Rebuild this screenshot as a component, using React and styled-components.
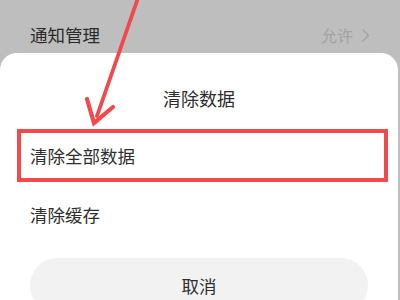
import styled, { createGlobalStyle } from "styled-components";

const GlobalStyle = createGlobalStyle`
  html, body {
    margin: 0;
    padding: 0;
    background: #bebebe;
  }
  body {
    font-family: "Noto Sans CJK SC", "Noto Sans", sans-serif;
  }
`;

export default function App() {
  return (
    <>
      <GlobalStyle />
      <Page>
        <SettingRow>
          <SettingLabel>通知管理</SettingLabel>
          <SettingValue>
            允许
            <svg width="9" height="15" viewBox="0 0 9 15">
              <path d="M1.5 1.5 L7.5 7.5 L1.5 13.5" fill="none" stroke="#a2a2a2" strokeWidth="1.4" />
            </svg>
          </SettingValue>
        </SettingRow>
        <Sheet>
          <SheetTitle>清除数据</SheetTitle>
          <Option highlighted>清除全部数据</Option>
          <Option>清除缓存</Option>
          <CancelButton>取消</CancelButton>
        </Sheet>
        <Arrow width="400" height="300" viewBox="0 0 400 300">
          <line x1="138" y1="-2" x2="97" y2="116" stroke="#f2494a" strokeWidth="3.8" strokeLinecap="round" />
          <path d="M87 99 L94 123 L113 107" fill="none" stroke="#f2494a" strokeWidth="4.2" strokeLinejoin="miter" strokeLinecap="round" />
        </Arrow>
      </Page>
    </>
  );
}

const Page = styled.div`
  position: relative;
  width: 400px;
  height: 300px;
  overflow: hidden;
  background: #bebebe;
`;

const SettingRow = styled.div`
  height: 53px;
  box-sizing: border-box;
  padding: 18px 30px 0;
  display: flex;
  align-items: flex-start;
  justify-content: space-between;
`;

const SettingLabel = styled.span`
  font-size: 17.5px;
  line-height: 34px;
  color: #2a2a2a;
`;

const SettingValue = styled.span`
  display: flex;
  align-items: center;
  gap: 8px;
  font-size: 16px;
  line-height: 34px;
  color: #a2a2a2;
`;

const Sheet = styled.div`
  background: #fff;
  border-radius: 17px 17px 0 0;
  margin-right: 2px;
  height: 260px;
  display: flex;
  flex-direction: column;
`;

const SheetTitle = styled.div`
  padding-top: 30px;
  line-height: 30px;
  font-size: 18px;
  text-align: center;
  color: #2e2e2e;
`;

const Option = styled.div`
  box-sizing: border-box;
  display: flex;
  align-items: center;
  font-size: 17.5px;
  color: #2e2e2e;
  height: ${(p) => (p.highlighted ? "54px" : "64px")};
  margin: ${(p) => (p.highlighted ? "16px 10px 0 17px" : "0")};
  padding-left: ${(p) => (p.highlighted ? "9px" : "30px")};
  border: ${(p) => (p.highlighted ? "4px solid #f2494a" : "none")};
`;

const CancelButton = styled.div`
  margin: 12px 30px 0;
  height: 56px;
  border-radius: 28px;
  background: #f2f2f2;
  display: flex;
  align-items: center;
  justify-content: center;
  font-size: 17.5px;
  color: #2e2e2e;
`;

const Arrow = styled.svg`
  position: absolute;
  left: 0;
  top: 0;
  pointer-events: none;
`;
